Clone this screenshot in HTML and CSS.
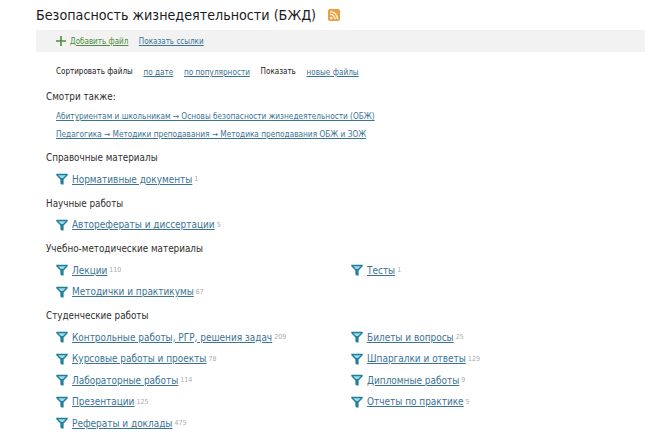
FILE: index.html
```html
<!DOCTYPE html>
<html lang="ru">
<head>
<meta charset="utf-8">
<title>Безопасность жизнедеятельности (БЖД)</title>
<link rel="stylesheet" href="styles.css">
</head>
<body>
<svg class="defs" width="0" height="0" aria-hidden="true">
  <symbol id="funnel" viewBox="0 0 12 12">
    <path d="M0.3 0.8 L11.7 0.8 L11.7 2.2 L7.6 6.4 L7.6 11.6 L5.6 11.6 L4.4 10.4 L4.4 6.4 L0.3 2.2 Z" fill="#1f7f9c"/>
    <path d="M2.2 2.2 L9.8 2.2 L7 5 L5 5 Z" fill="#9fdbe8"/>
  </symbol>
</svg>
<main class="page">
  <h1 class="title">Безопасность жизнедеятельности (БЖД)
    <svg class="rss" viewBox="0 0 12 12" width="12" height="12"><rect width="12" height="12" rx="2" fill="#e8a044"/><circle cx="3.2" cy="9" r="1.3" fill="#fff3dc"/><path d="M2 5.2 A5 5 0 0 1 7 10.2 M2 2.6 A7.6 7.6 0 0 1 9.6 10.2" fill="none" stroke="#fff3dc" stroke-width="1.4"/></svg>
  </h1>
  <div class="actions">
    <svg class="plus" viewBox="0 0 10 10" width="10" height="10"><path d="M5 0 V10 M0 5 H10" stroke="#4c8f3c" stroke-width="1.6" fill="none"/></svg>
    <a class="link add" href="#">Добавить файл</a>
    <a class="link" href="#">Показать ссылки</a>
  </div>
  <div class="sort">
    <span>Сортировать файлы</span>
    <a class="link" href="#">по дате</a>
    <a class="link" href="#">по популярности</a>
    <span>Показать</span>
    <a class="link" href="#">новые файлы</a>
  </div>
  <h2 class="heading see">Смотри также:</h2>
  <ul class="also">
    <li><a class="link" href="#">Абитуриентам и школьникам → Основы безопасности жизнедеятельности (ОБЖ)</a></li>
    <li><a class="link" href="#">Педагогика → Методики преподавания → Методика преподавания ОБЖ и ЗОЖ</a></li>
  </ul>
  <h2 class="heading">Справочные материалы</h2>
  <ul class="cats">
    <li><svg class="ico"><use href="#funnel"/></svg><a class="cat" href="#">Нормативные документы</a><span class="n">1</span></li>
  </ul>
  <h2 class="heading">Научные работы</h2>
  <ul class="cats">
    <li><svg class="ico"><use href="#funnel"/></svg><a class="cat" href="#">Авторефераты и диссертации</a><span class="n">5</span></li>
  </ul>
  <h2 class="heading">Учебно-методические материалы</h2>
  <ul class="cats">
    <li><svg class="ico"><use href="#funnel"/></svg><a class="cat" href="#">Лекции</a><span class="n">110</span></li>
    <li><svg class="ico"><use href="#funnel"/></svg><a class="cat" href="#">Тесты</a><span class="n">1</span></li>
    <li><svg class="ico"><use href="#funnel"/></svg><a class="cat" href="#">Методички и практикумы</a><span class="n">67</span></li>
  </ul>
  <h2 class="heading">Студенческие работы</h2>
  <ul class="cats">
    <li><svg class="ico"><use href="#funnel"/></svg><a class="cat" href="#">Контрольные работы, РГР, решения задач</a><span class="n">209</span></li>
    <li><svg class="ico"><use href="#funnel"/></svg><a class="cat" href="#">Билеты и вопросы</a><span class="n">25</span></li>
    <li><svg class="ico"><use href="#funnel"/></svg><a class="cat" href="#">Курсовые работы и проекты</a><span class="n">78</span></li>
    <li><svg class="ico"><use href="#funnel"/></svg><a class="cat" href="#">Шпаргалки и ответы</a><span class="n">129</span></li>
    <li><svg class="ico"><use href="#funnel"/></svg><a class="cat" href="#">Лабораторные работы</a><span class="n">114</span></li>
    <li><svg class="ico"><use href="#funnel"/></svg><a class="cat" href="#">Дипломные работы</a><span class="n">9</span></li>
    <li><svg class="ico"><use href="#funnel"/></svg><a class="cat" href="#">Презентации</a><span class="n">125</span></li>
    <li><svg class="ico"><use href="#funnel"/></svg><a class="cat" href="#">Отчеты по практике</a><span class="n">5</span></li>
    <li><svg class="ico"><use href="#funnel"/></svg><a class="cat" href="#">Рефераты и доклады</a><span class="n">475</span></li>
  </ul>
</main>
</body>
</html>
```
FILE: styles.css
```css
* { box-sizing: border-box; }
html, body { margin: 0; padding: 0; background: #fff; overflow: hidden; }
body { font-family: "DejaVu Sans Condensed", "Noto Sans", sans-serif; color: #222; }
.defs { position: absolute; }
.page { width: 645px; height: 435px; padding: 3px 0 0 36px; }
.title { margin: 0; font-size: 14.2px; line-height: 24px; font-weight: 400; color: #1c1c1c; display: flex; align-items: center; gap: 12px; height: 27px; padding-bottom: 3px; }
.rss { flex: none; }
.actions { height: 22px; background: #f2f2f2; padding-left: 20px; display: flex; align-items: center; font-size: 8px; gap: 10.5px; }
.plus { margin-right: -6.5px; flex: none; }
.link { color: #3a7394; text-decoration: underline; }
.add { color: #4c8f3c; }
.sort { margin: 14px 0 0 20px; height: 12px; font-size: 8px; line-height: 12px; display: flex; gap: 10.7px; color: #222; }
.sort .link { font-size: 8.15px; }
.heading { margin: 0 0 0 10px; font-size: 9.8px; font-weight: 400; line-height: 14px; color: #2f2f2f; }
.see { margin-top: 12px; }
.also { list-style: none; margin: 3px 0 8px 20px; padding: 0; font-size: 8.2px; line-height: 18px; }
.cats { list-style: none; margin: 7px 0 10.5px 20px; padding: 0; display: grid; grid-template-columns: 295px 1fr; row-gap: 7.6px; }
.cats li { display: flex; align-items: center; height: 14px; white-space: nowrap; }
.ico { width: 12px; height: 12px; margin-right: 4px; flex: none; }
.cat { font-size: 9.95px; color: #3a7394; text-decoration: underline; }
.n { font-size: 7px; color: #aaa; margin-left: 2px; }
```
